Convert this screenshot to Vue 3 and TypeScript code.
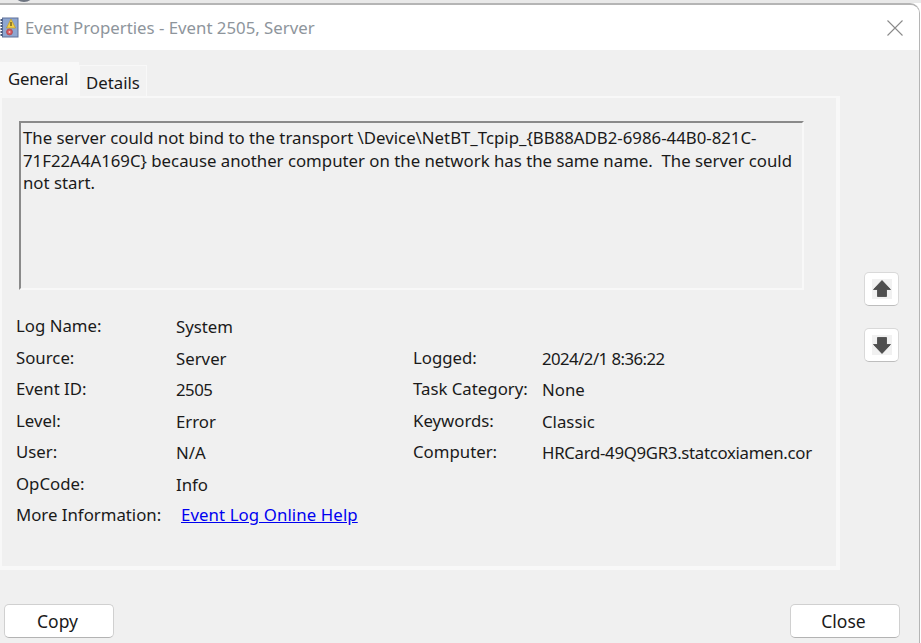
<script setup lang="ts">
interface Field { label: string; value: string; tight?: string }
const leftFields: Field[] = [
  { label: 'Log Name:', value: 'System' },
  { label: 'Source:', value: 'Server' },
  { label: 'Event ID:', value: '2505', tight: 'tight-id' },
  { label: 'Level:', value: 'Error' },
  { label: 'User:', value: 'N/A' },
  { label: 'OpCode:', value: 'Info' },
]
const rightFields: Field[] = [
  { label: 'Logged:', value: '2024/2/1 8:36:22', tight: 'tight-date' },
  { label: 'Task Category:', value: 'None' },
  { label: 'Keywords:', value: 'Classic' },
  { label: 'Computer:', value: 'HRCard-49Q9GR3.statcoxiamen.cor', tight: 'tight-host' },
]
</script>

<template>
  <div class="screen">
    <div class="behind">
      <svg class="behind-clock" width="24" height="24" viewBox="0 0 24 24">
        <circle cx="12" cy="12" r="10" fill="#dfe6ee" stroke="#6d7480" stroke-width="2" />
      </svg>
      <span class="behind-info">Information</span>
      <span class="behind-date">2024/2/1 8:36:22</span>
    </div>
    <div class="window">
      <header class="titlebar">
        <svg class="app-icon" width="20" height="21" viewBox="0 0 20 21">
          <rect x="2.5" y="1" width="15.5" height="19" fill="#8ea6d0" stroke="#5f7199" />
          <path d="M1.5 2v17" stroke="#4a5a7c" stroke-width="2" stroke-dasharray="2 1" />
          <path d="M11 2 L15.5 11 H6.5 Z" fill="#f2d14a" stroke="#c09a22" stroke-width=".7" />
          <rect x="10.4" y="5" width="1.2" height="4" fill="#5a4a10" />
          <circle cx="9.5" cy="15" r="3" fill="#d6585f" stroke="#a93a42" stroke-width=".6" />
          <circle cx="9.5" cy="15" r="1" fill="#f2c4c6" />
        </svg>
        <span class="title">Event Properties - Event 2505, Server</span>
        <svg class="close-x" width="16" height="16" viewBox="0 0 16 16">
          <path d="M.5.5l15 15M15.5.5l-15 15" stroke="#8a8a8a" stroke-width="1.1" fill="none" />
        </svg>
      </header>

      <div class="tabs">
        <div class="tab active">General</div>
        <div class="tab">Details</div>
      </div>

      <div class="middle">
        <section class="panel">
          <div class="message">The server could not bind to the transport \Device\NetBT_Tcpip_{BB88ADB2-6986-44B0-821C-71F22A4A169C} because another computer on the network has the same name.&nbsp; The server could not start.</div>

          <div class="fields">
            <div class="column col-left">
              <div v-for="f in leftFields" :key="f.label" class="row">
                <span class="label">{{ f.label }}</span>
                <span class="value" :class="f.tight">{{ f.value }}</span>
              </div>
            </div>
            <div class="column col-right">
              <div v-for="f in rightFields" :key="f.label" class="row">
                <span class="label">{{ f.label }}</span>
                <span class="value" :class="f.tight">{{ f.value }}</span>
              </div>
            </div>
          </div>
          <div class="more">
            <span class="more-label">More Information:</span>
            <a class="link" href="#">Event Log Online Help</a>
          </div>
        </section>

        <div class="arrows">
          <button class="arrow" type="button" aria-label="Previous event">
            <svg width="20" height="20" viewBox="0 0 20 20"><rect width="20" height="20" fill="#f1f1f1" /><path d="M10 1.5 L18.5 10.5 H14.5 V17.5 H5.5 V10.5 H1.5 Z" fill="#4f4f4f" stroke="#3a3a3a" stroke-width=".7" stroke-linejoin="round" /></svg>
          </button>
          <button class="arrow" type="button" aria-label="Next event">
            <svg width="20" height="20" viewBox="0 0 20 20"><rect width="20" height="20" fill="#f1f1f1" /><path d="M10 18.5 L18.5 9.5 H14.5 V2.5 H5.5 V9.5 H1.5 Z" fill="#4f4f4f" stroke="#3a3a3a" stroke-width=".7" stroke-linejoin="round" /></svg>
          </button>
        </div>
      </div>

      <footer class="footer">
        <button class="btn" type="button">Copy</button>
        <button class="btn" type="button">Close</button>
      </footer>
    </div>
  </div>
</template>

<style>
html, body { margin: 0; padding: 0; background: #fff; }
</style>

<style scoped>
.screen {
  width: 921px;
  height: 643px;
  overflow: hidden;
  display: flex;
  flex-direction: column;
  font-family: "Noto Sans", "Open Sans", sans-serif;
  font-size: 16.8px;
  color: #1a1a1a;
  background: #fff;
}
.behind {
  height: 3px;
  flex: none;
  position: relative;
  overflow: hidden;
  background: #e9e9e9;
  font-size: 15.5px;
  color: #333;
}
.behind span { position: absolute; top: -16px; line-height: 20px; }
.behind-clock { position: absolute; left: 12px; top: -21px; }
.behind-info { left: 40px; }
.behind-date { left: 526px; }
.window {
  flex: 1;
  min-height: 0;
  display: flex;
  flex-direction: column;
  background: #f0f0f0;
  border-top: 2px solid #b5b5b5;
  border-right: 1px solid #b5b5b5;
  border-top-right-radius: 10px;
  margin-right: 1px;
  overflow: hidden;
}
.titlebar {
  height: 45px;
  flex: none;
  background: #fff;
  display: flex;
  align-items: center;
  padding: 0 16px 0 0;
}
.app-icon { flex: none; margin-right: 5px; }
.title { flex: 1; color: #8e959c; }
.close-x { flex: none; }
.tabs {
  display: flex;
  align-items: flex-end;
  height: 46px;
  flex: none;
}
.tab {
  height: 30px;
  line-height: 33px;
  padding: 0 0 0 6px;
  width: 60px;
  background: #f2f2f2;
  border: 1px solid #f8f8f8;
  border-bottom: none;
}
.tab.active {
  height: 34px;
  line-height: 33px;
  width: 71px;
  padding: 0 0 0 8px;
  background: #f8f8f8;
  border: none;
  letter-spacing: -0.25px;
}
.middle { display: flex; flex: none; height: 474px; }
.panel {
  box-sizing: border-box;
  width: 840px;
  height: 474px;
  border: 2px solid #f8f8f8;
  border-right-width: 4px;
  border-bottom-width: 4px;
  background: #f0f0f0;
  padding: 23px 0 0 17px;
  flex: none;
}
.message {
  box-sizing: border-box;
  width: 785px;
  height: 169px;
  border-style: solid;
  border-width: 2px;
  border-color: #8a8a8a #f8f8f8 #f8f8f8 #8a8a8a;
  padding: 4px 2px;
  line-height: 22.5px;
}
.fields { display: flex; margin-top: 25px; }
.column { display: flex; flex-direction: column; }
.col-left { width: 397px; margin-left: -3px; }
.col-right { margin-top: 31.5px; }
.row { display: flex; height: 31.5px; align-items: flex-start; }
.label { line-height: 22px; }
.value { line-height: 22px; position: relative; top: 1px; white-space: nowrap; }
.tight-id { letter-spacing: -0.5px; }
.tight-date { letter-spacing: -0.56px; }
.tight-host { letter-spacing: -0.3px; }
.col-left .label { width: 160px; }
.col-right .label { width: 129px; }
.more { display: flex; margin-left: -3px; line-height: 22px; }
.more-label { width: 165px; }
.link { color: #0000f0; text-decoration: underline; letter-spacing: 0.1px; }
.arrows {
  display: flex;
  flex-direction: column;
  gap: 22px;
  padding: 176px 0 0 24px;
}
.arrow {
  width: 35px;
  height: 34px;
  padding: 0;
  display: flex;
  align-items: center;
  justify-content: center;
  background: #fff;
  border: 1px solid #d9d9d9;
  border-bottom-color: #bdbdbd;
  border-radius: 5px;
}
.footer {
  flex: 1;
  display: flex;
  justify-content: space-between;
  align-items: flex-start;
  padding: 34px 19px 0 4px;
}
.btn {
  width: 110px;
  height: 34px;
  background: #fff;
  border: 1px solid #d0d0d0;
  border-bottom-color: #b3b3b3;
  border-radius: 5px;
  font: inherit;
  font-size: 17.5px;
  color: #1a1a1a;
  padding: 0 3px 0 0;
}
</style>
